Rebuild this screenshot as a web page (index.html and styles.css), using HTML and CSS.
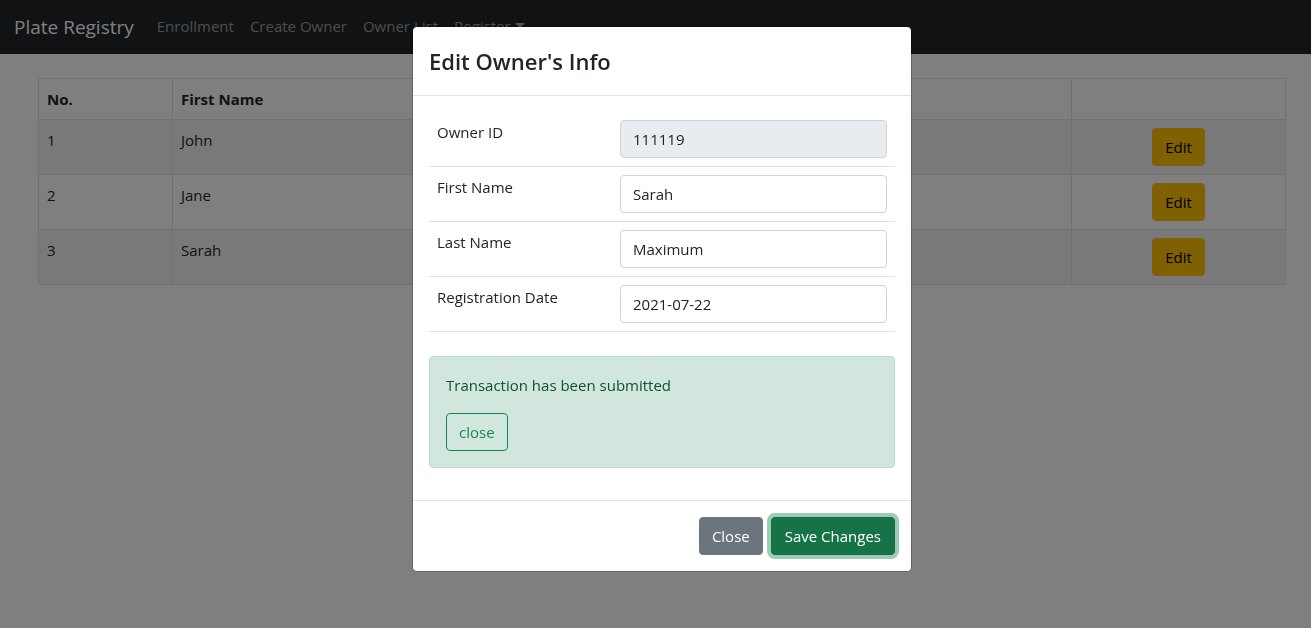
FILE: index.html
```
<!DOCTYPE html>
<html lang="en">
<head>
<meta charset="utf-8">
<meta name="viewport" content="width=device-width, initial-scale=1">
<title>Plate Registry</title>
<link rel="stylesheet" href="styles.css">
</head>
<body>
<nav class="navbar">
  <a class="brand" href="#">Plate Registry</a>
  <a class="nav-link" href="#">Enrollment</a>
  <a class="nav-link" href="#">Create Owner</a>
  <a class="nav-link" href="#">Owner List</a>
  <a class="nav-link dropdown" href="#">Register</a>
</nav>
<main class="content">
  <table class="owners">
    <colgroup><col class="col-no"><col><col class="col-action"></colgroup>
    <thead><tr><th>No.</th><th>First Name</th><th></th></tr></thead>
    <tbody>
      <tr><td>1</td><td>John</td><td class="action"><button class="btn btn-warning" type="button">Edit</button></td></tr>
      <tr><td>2</td><td>Jane</td><td class="action"><button class="btn btn-warning" type="button">Edit</button></td></tr>
      <tr><td>3</td><td>Sarah</td><td class="action"><button class="btn btn-warning" type="button">Edit</button></td></tr>
    </tbody>
  </table>
</main>
<div class="backdrop">
  <form class="modal" role="dialog" aria-modal="true" aria-labelledby="modal-title">
    <header class="modal-header"><h4 class="modal-title" id="modal-title">Edit Owner's Info</h4></header>
    <div class="modal-body">
      <div class="field"><label for="owner-id">Owner ID</label><input class="control" id="owner-id" type="text" value="111119" disabled></div>
      <div class="field"><label for="first-name">First Name</label><input class="control" id="first-name" type="text" value="Sarah"></div>
      <div class="field"><label for="last-name">Last Name</label><input class="control" id="last-name" type="text" value="Maximum"></div>
      <div class="field"><label for="reg-date">Registration Date</label><input class="control" id="reg-date" type="text" value="2021-07-22"></div>
      <div class="alert" role="alert">
        <p class="alert-text">Transaction has been submitted</p>
        <button class="btn btn-outline" type="button">close</button>
      </div>
    </div>
    <footer class="modal-footer">
      <button class="btn btn-secondary" type="button">Close</button>
      <button class="btn btn-success" type="button">Save Changes</button>
    </footer>
  </form>
</div>
</body>
</html>
```
FILE: styles.css
```
* { box-sizing: border-box; }
body {
  margin: 0;
  background: #fff;
  color: #212529;
  font-family: "Open Sans", "Noto Sans", sans-serif;
  font-size: 15px;
  line-height: 24px;
}
.navbar {
  display: flex;
  align-items: center;
  height: 54px;
  padding: 0 14px;
  background: #212529;
}
.brand {
  margin-right: 15px;
  color: #fff;
  font-size: 19px;
  text-decoration: none;
}
.nav-link {
  padding: 7px 8px 9px;
  color: rgba(255, 255, 255, 0.55);
  text-decoration: none;
}
.dropdown::after {
  content: "";
  display: inline-block;
  margin-left: 4px;
  vertical-align: 4px;
  border-top: 5px solid;
  border-right: 5px solid transparent;
  border-left: 5px solid transparent;
}
.content { padding: 24px 25px 0 38px; }
.owners {
  width: 100%;
  table-layout: fixed;
  border-collapse: collapse;
}
.col-no { width: 134px; }
.col-action { width: 214px; }
.owners th, .owners td {
  padding: 8px;
  border: 1px solid #dee2e6;
  text-align: left;
  vertical-align: top;
}
.owners tbody tr:nth-child(odd) { background: #f2f2f2; }
.owners .action { text-align: center; }
.btn {
  padding: 6px 12px;
  border: 1px solid transparent;
  border-radius: 4px;
  font: inherit;
  line-height: 24px;
  vertical-align: top;
}
.btn-warning { background: #ffc107; border-color: #ffc107; color: #000; }
.btn-outline { background: transparent; border-color: #198754; color: #198754; }
.btn-secondary { background: #6c757d; border-color: #6c757d; color: #fff; }
.btn-success {
  padding: 6px 13px;
  background: #157347;
  border-color: #146c43;
  color: #fff;
  box-shadow: 0 0 0 4px rgba(60, 153, 110, 0.5);
}
.backdrop {
  position: fixed;
  inset: 0;
  display: flex;
  align-items: flex-start;
  justify-content: center;
  padding: 26px 0 26px 13px;
  overflow: auto;
  background: rgba(0, 0, 0, 0.5);
}
.modal {
  width: 100%;
  max-width: 500px;
  background: #fff;
  background-clip: padding-box;
  border: 1px solid rgba(0, 0, 0, 0.2);
  border-radius: 5px;
}
.modal-header { padding: 16px; border-bottom: 1px solid #dee2e6; }
.modal-title {
  margin: 0;
  font-size: 22px;
  font-weight: 600;
  line-height: 36px;
}
.modal-body { padding: 16px 16px 32px; }
.field {
  display: grid;
  grid-template-columns: 175px 1fr;
  column-gap: 8px;
  align-items: start;
  padding: 8px;
  border-bottom: 1px solid #dee2e6;
}
.control {
  width: 100%;
  height: 38px;
  padding: 6px 12px;
  border: 1px solid #ced4da;
  border-radius: 4px;
  background: #fff;
  color: #212529;
  font: inherit;
}
.control:disabled { background: #e9ecef; }
.alert {
  margin-top: 24px;
  padding: 16px;
  border: 1px solid #badbcc;
  border-radius: 4px;
  background: #d1e7dd;
  color: #0f5132;
}
.alert-text { margin: 0 0 16px; }
.modal-footer {
  display: flex;
  justify-content: flex-end;
  gap: 8px;
  padding: 16px;
  border-top: 1px solid #dee2e6;
}
```
